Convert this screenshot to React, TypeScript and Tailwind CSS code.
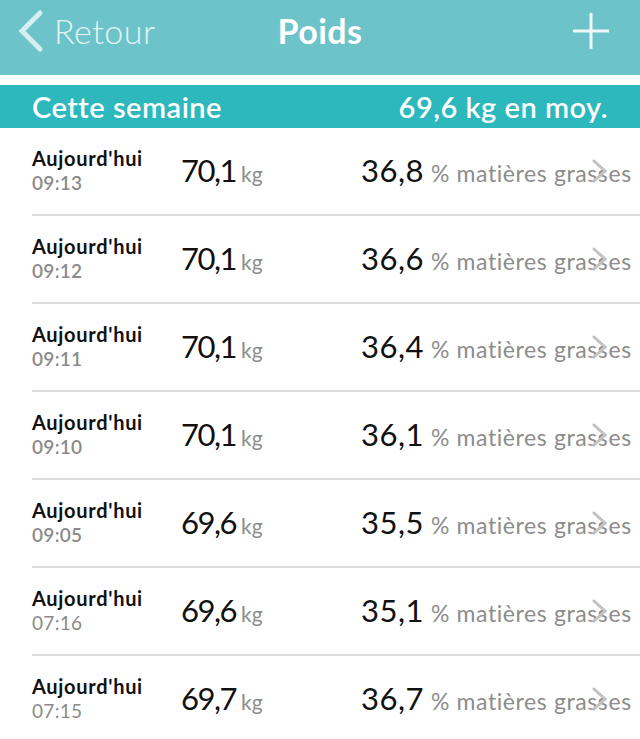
import React from 'react'

type Entry = { time: string; weight: string; fat: string; light?: boolean }

const ENTRIES: Entry[] = [
  { time: '09:13', weight: '70,1', fat: '36,8' },
  { time: '09:12', weight: '70,1', fat: '36,6' },
  { time: '09:11', weight: '70,1', fat: '36,4' },
  { time: '09:10', weight: '70,1', fat: '36,1' },
  { time: '09:05', weight: '69,6', fat: '35,5' },
  { time: '07:16', weight: '69,6', fat: '35,1', light: true },
  { time: '07:15', weight: '69,7', fat: '36,7', light: true },
]

const FONT = { fontFamily: 'Lato, "Noto Sans", sans-serif' }

function Row({ e }: { e: Entry }) {
  return (
    <div className="relative ml-[32px] flex h-[88px] items-center border-b-2 border-[#dcdcdc]">
      <div className="w-[149px] pb-[2px] leading-none">
        <div className="text-[20px] font-bold tracking-[0.7px] text-[#111]">Aujourd'hui</div>
        <div
          className={
            e.light
              ? 'mt-[5px] text-[19px] font-normal tracking-[0.3px] text-[#8a8a8a]'
              : 'mt-[5px] text-[19px] font-semibold tracking-[0.3px] text-[#8a8a8a]'
          }
        >
          {e.time}
        </div>
      </div>
      <div className="flex w-[180px] items-baseline gap-[5px] pb-[2px]">
        <span className="text-[31px] tracking-[-1.5px] text-[#111]">{e.weight}</span>
        <span className="text-[21px] text-[#8c8c8c]">kg</span>
      </div>
      <div className="flex items-baseline gap-[7px] whitespace-nowrap pb-[2px]">
        <span className="text-[31px] tracking-[0.5px] text-[#111]">{e.fat}</span>
        <span className="text-[23px] tracking-[0.6px] text-[#8c8c8c]">% matières grasses</span>
      </div>
      <svg
        className="absolute left-[560px] top-[31px]"
        width="16"
        height="24"
        viewBox="0 0 16 24"
        fill="none"
      >
        <path d="M2 2 L13 12 L2 22" stroke="#c2c2c2" strokeWidth="3" strokeLinecap="round" />
      </svg>
    </div>
  )
}

export default function App() {
  return (
    <div className="h-[739px] w-[640px] overflow-hidden bg-white" style={FONT}>
      <div className="grid h-[75px] grid-cols-3 items-center bg-[#6cc3ca] px-[16px] pb-[14px]">
        <div className="flex items-center gap-[10px]">
          <svg width="28" height="44" viewBox="0 0 28 44" fill="none">
            <path d="M24 4 L6 22 L24 40" stroke="#d6eff1" strokeWidth="5" strokeLinecap="round" />
          </svg>
          <span className="text-[34px] font-light tracking-[0.5px] text-[#e4f4f5]">Retour</span>
        </div>
        <div className="text-center text-[34px] font-bold tracking-[0.5px] text-white">Poids</div>
        <div className="flex justify-end pr-[14px]">
          <svg width="38" height="38" viewBox="0 0 38 38">
            <path d="M19 1 V37 M1 19 H37" stroke="#eef8f9" strokeWidth="3" />
          </svg>
        </div>
      </div>
      <div className="h-[10px]" />
      <div className="flex h-[43px] items-center justify-between bg-[#2cb8bc] px-[32px] text-[29px] font-semibold tracking-[0.5px] text-white">
        <span>Cette semaine</span>
        <span>69,6 kg en moy.</span>
      </div>
      {ENTRIES.map((e, i) => (
        <Row key={i} e={e} />
      ))}
    </div>
  )
}
